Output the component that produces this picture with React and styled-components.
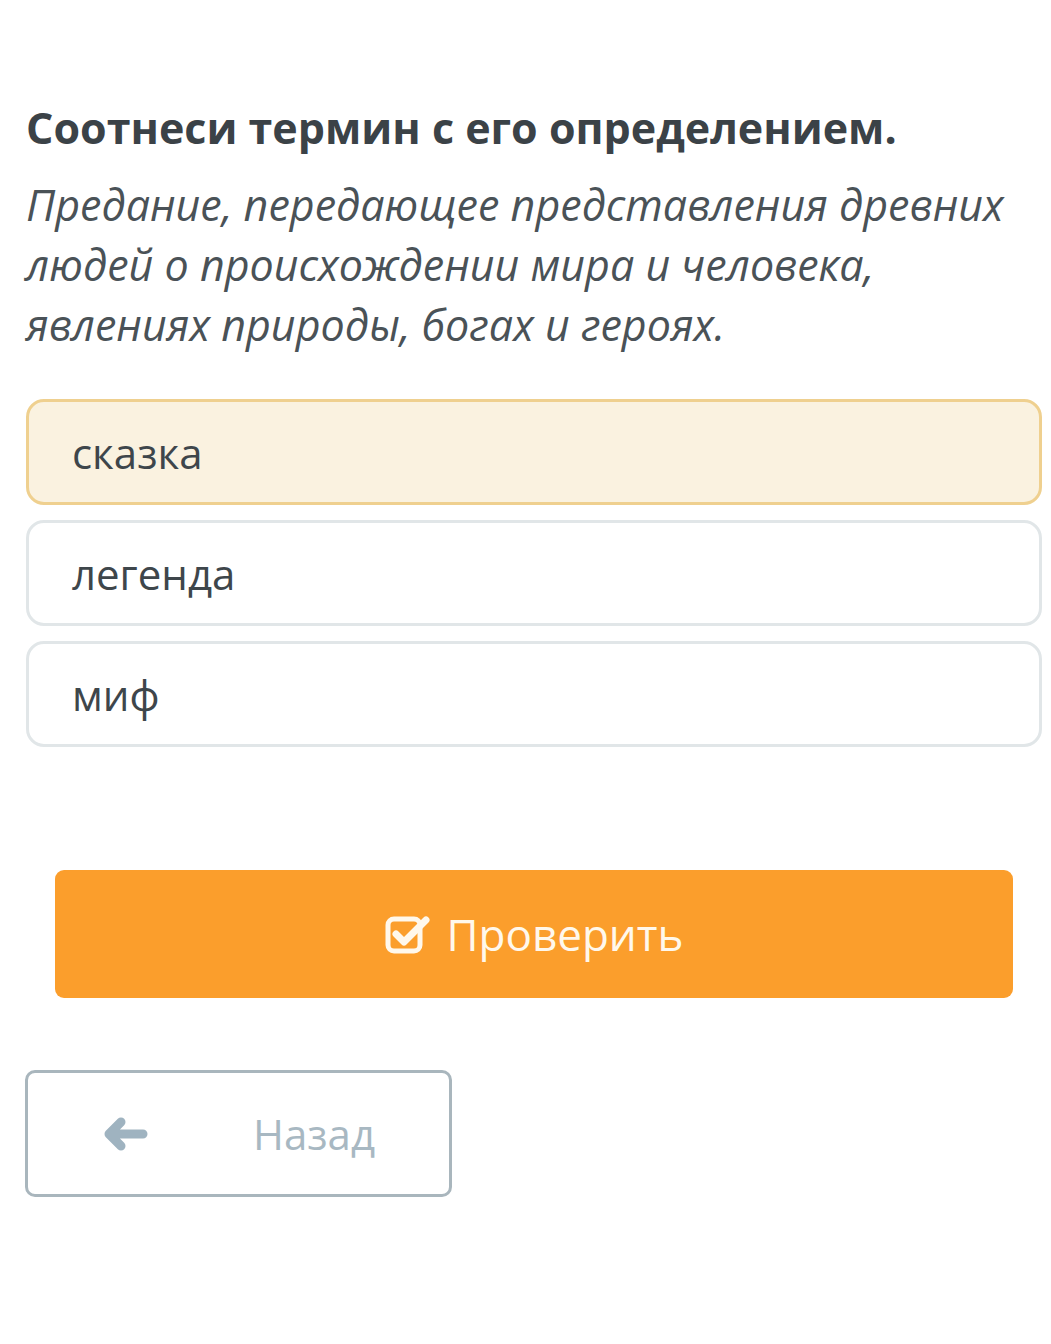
import styled, { createGlobalStyle } from 'styled-components'

const GlobalStyle = createGlobalStyle`
  body {
    margin: 0;
    background: #fff;
    font-family: "Open Sans", "Noto Sans", sans-serif;
  }
`

const Page = styled.div`
  padding: 88px 9px 0 26px;
`

const Title = styled.h2`
  margin: 0;
  font-size: 43px;
  line-height: 80px;
  font-weight: 700;
  color: #3b4247;
`

const Definition = styled.p`
  margin: 7px 0 0;
  font-size: 43px;
  line-height: 60px;
  font-style: italic;
  color: #4a5257;
`

const Options = styled.div`
  display: flex;
  flex-direction: column;
  gap: 15px;
  margin-top: 44px;
`

const Option = styled.div`
  height: 106px;
  box-sizing: border-box;
  display: flex;
  align-items: center;
  padding: 0 43px;
  border-radius: 18px;
  font-size: 42px;
  color: #3e464b;
  border: 3px solid ${(p) => (p.$selected ? '#efd08f' : '#e1e6e8')};
  background: ${(p) => (p.$selected ? '#faf2e0' : '#fff')};
`

const CheckButton = styled.button`
  display: flex;
  align-items: center;
  justify-content: center;
  gap: 16px;
  width: calc(100% - 58px);
  height: 128px;
  margin: 123px 0 0 29px;
  border: none;
  border-radius: 9px;
  background: #fb9e2c;
  color: #fff8ec;
  font-family: inherit;
  font-size: 44px;
  cursor: pointer;
`

const BackButton = styled.button`
  display: flex;
  align-items: center;
  width: 427px;
  height: 127px;
  box-sizing: border-box;
  margin: 72px 0 0 -1px;
  padding: 0 0 0 75px;
  border: 3px solid #a9b6bd;
  border-radius: 10px;
  background: #fff;
  color: #a8b8c2;
  font-family: inherit;
  font-size: 42px;
  cursor: pointer;
`

const BackLabel = styled.span`
  margin-left: 104px;
`

const CheckIcon = () => (
  <svg width="46" height="40" viewBox="0 0 46 40" fill="none">
    <rect x="3" y="5" width="32" height="32" rx="6" stroke="#fff8ec" strokeWidth="5" />
    <path d="M11 20 L19 28 L41 6" stroke="#fff8ec" strokeWidth="7" strokeLinecap="round" strokeLinejoin="round" />
  </svg>
)

const ArrowIcon = () => (
  <svg width="46" height="36" viewBox="0 0 46 36" fill="none">
    <path d="M40 18 H10 M18 6 L6 18 L18 30" stroke="#9fb3c0" strokeWidth="9" strokeLinecap="round" strokeLinejoin="round" />
  </svg>
)

const options = ['сказка', 'легенда', 'миф']

export default function App() {
  return (
    <Page>
      <GlobalStyle />
      <Title>Соотнеси термин с его определением.</Title>
      <Definition>
        Предание, передающее представления древних людей о происхождении мира и человека,
        явлениях природы, богах и героях.
      </Definition>
      <Options>
        {options.map((o, i) => (
          <Option key={o} $selected={i === 0}>{o}</Option>
        ))}
      </Options>
      <CheckButton>
        <CheckIcon />
        Проверить
      </CheckButton>
      <BackButton>
        <ArrowIcon />
        <BackLabel>Назад</BackLabel>
      </BackButton>
    </Page>
  )
}
